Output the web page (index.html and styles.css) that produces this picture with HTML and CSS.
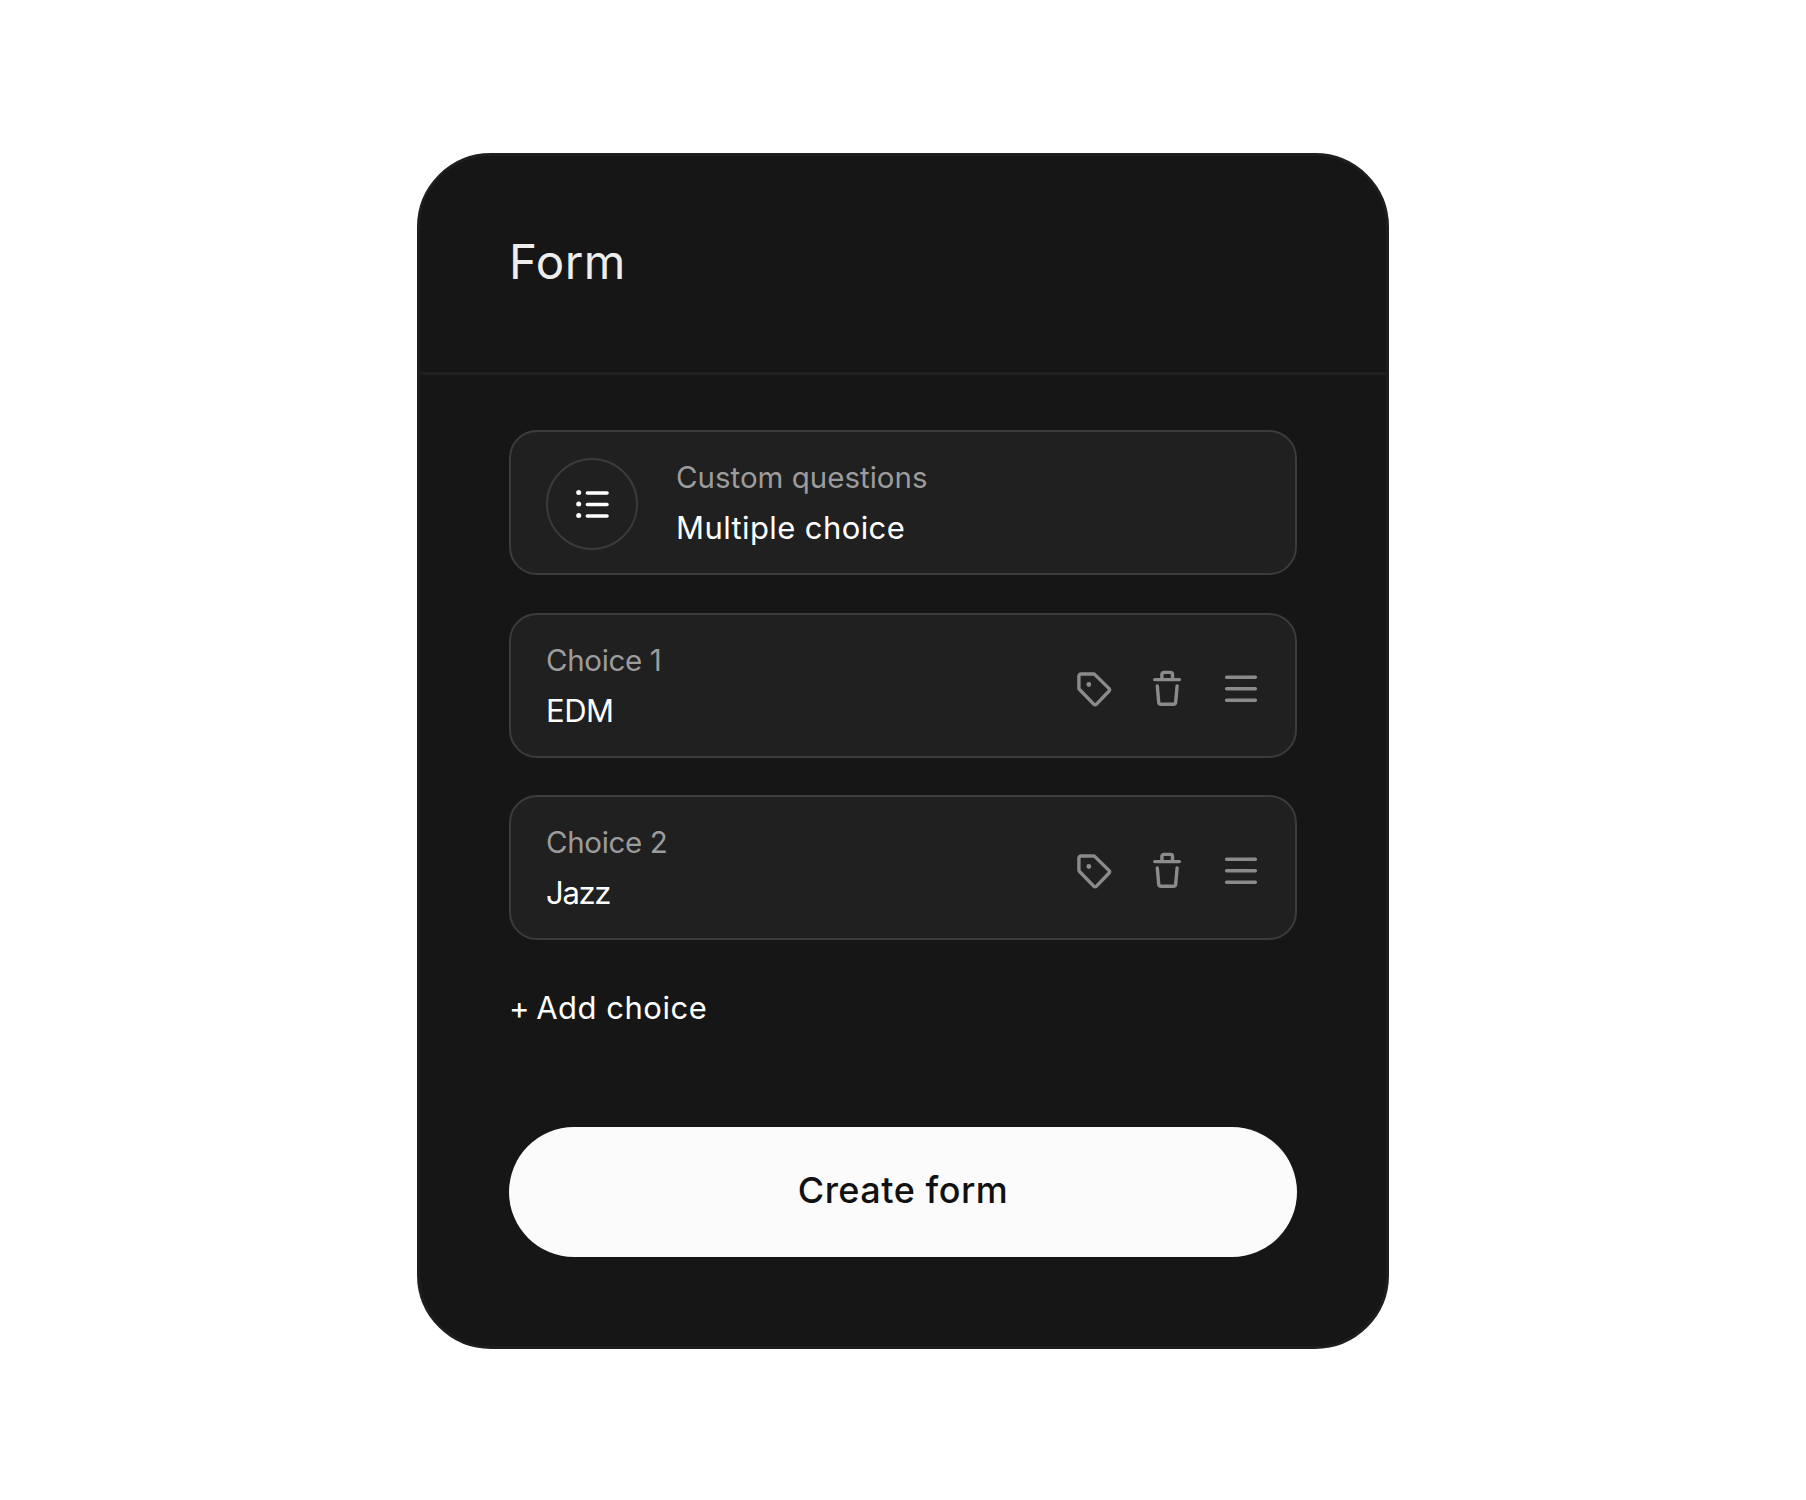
FILE: index.html
```html
<!DOCTYPE html>
<html lang="en">
<head>
    <meta charset="UTF-8">
    <meta name="viewport" content="width=device-width, initial-scale=1.0">
    <title>Form</title>
    <link rel="stylesheet" href="styles.css">
</head>
<body>

    <!-- Shared icons -->
    <svg class="sprite" width="0" height="0">
        <symbol id="icon-tag" viewBox="0 0 37 37">
            <path d="M2.9 6v12.1a2 2 0 0 0 .6 1.4l14.2 14.6a2 2 0 0 0 2.8 0l12.4-12.9a2 2 0 0 0 0-2.8L18.9 4.6a2 2 0 0 0-1.4-.6H4.9a2 2 0 0 0-2 2z"/>
            <circle class="dot" cx="12.8" cy="14.5" r="2.4"/>
        </symbol>
        <symbol id="icon-trash" viewBox="0 0 37 37">
            <path d="M5.7 9.6h24.7M12.9 9.4V4.4a2 2 0 0 1 2-2h6.6a2 2 0 0 1 2 2v5M8.3 15.9l1.4 16.2a2.4 2.4 0 0 0 2.4 2.2h12.2a2.4 2.4 0 0 0 2.4-2.2l1.4-16.2"/>
        </symbol>
        <symbol id="icon-menu" viewBox="0 0 37 37">
            <path d="M3.6 7.3h28.8M3.6 18.8h28.8M3.6 30.3h28.8"/>
        </symbol>
    </svg>

    <!-- Form card -->
    <div class="card">
        <div class="header">
            <h1 class="title">Form</h1>
        </div>

        <div class="content">
            <div class="row">
                <div class="circle">
                    <svg class="icon list-icon" viewBox="0 0 37 37">
                        <path d="M13.4 7H33M13.4 18.5H33M13.4 30H33"/>
                        <circle class="dot" cx="4.7" cy="6.5" r="2.5"/>
                        <circle class="dot" cx="4.7" cy="18" r="2.5"/>
                        <circle class="dot" cx="4.7" cy="29.5" r="2.5"/>
                    </svg>
                </div>
                <div class="text text-wide">
                    <div class="label">Custom questions</div>
                    <div class="value">Multiple choice</div>
                </div>
            </div>

            <div class="row">
                <div class="text">
                    <div class="label">Choice 1</div>
                    <div class="value">EDM</div>
                </div>
                <div class="actions">
                    <svg class="icon"><use href="#icon-tag"/></svg>
                    <svg class="icon"><use href="#icon-trash"/></svg>
                    <svg class="icon"><use href="#icon-menu"/></svg>
                </div>
            </div>

            <div class="row">
                <div class="text">
                    <div class="label">Choice 2</div>
                    <div class="value value-tight">Jazz</div>
                </div>
                <div class="actions">
                    <svg class="icon"><use href="#icon-tag"/></svg>
                    <svg class="icon"><use href="#icon-trash"/></svg>
                    <svg class="icon"><use href="#icon-menu"/></svg>
                </div>
            </div>

            <div class="add"><span class="plus">+</span> Add choice</div>

            <button type="button" class="create">Create form</button>
        </div>
    </div>

</body>
</html>
```
FILE: styles.css
```css
* { box-sizing: border-box; }

body {
    margin: 0;
    min-height: 1500px;
    padding-top: 153px;
    background-color: #fff;
    font-family: Inter, "Liberation Sans", sans-serif;
}

.sprite { display: none; }

.card {
    width: 972px;
    height: 1195.5px;
    margin: 0 auto;
    border: 3px solid #1e1e1e;
    border-radius: 74px;
    background-color: #161616;
}

.header {
    height: 219px;
    padding: 76px 89px 0;
    border-bottom: 3px solid #1f1f1f;
}

.title {
    margin: 0;
    color: #ededed;
    font-size: 47.5px;
    font-weight: 400;
    letter-spacing: 0.5px;
    line-height: 60px;
}

.content {
    display: flex;
    flex-direction: column;
    padding: 55.3px 89px 0;
}

.row {
    display: flex;
    align-items: center;
    height: 145px;
    margin-bottom: 37.4px;
    padding: 1px 35px 0;
    border: 2px solid #3c3c3c;
    border-radius: 28px;
    background-color: #202020;
}

.circle {
    display: flex;
    align-items: center;
    justify-content: center;
    width: 92px;
    height: 92px;
    margin: 2px 38px 0 0;
    border: 2px solid #3a3a3a;
    border-radius: 50%;
}

.label {
    color: #9c9c9c;
    font-size: 29.5px;
    letter-spacing: -0.35px;
    line-height: 50px;
}

.value {
    color: #fff;
    font-size: 31px;
    letter-spacing: -0.5px;
    line-height: 52px;
}

.value-tight { letter-spacing: -1.3px; }

.text-wide .label { letter-spacing: 0; }
.text-wide .value { letter-spacing: 0.4px; }

.actions {
    display: flex;
    gap: 36.7px;
    margin: 5px 0 0 auto;
}

.icon {
    width: 37px;
    height: 37px;
    fill: none;
    stroke: #8b8b8b;
    stroke-width: 3.4;
    stroke-linecap: round;
    stroke-linejoin: round;
    color: #8b8b8b;
}

.list-icon {
    stroke: #fff;
    stroke-width: 3.6;
    color: #fff;
}

.dot {
    fill: currentColor;
    stroke: none;
}

.add {
    margin-top: 11px;
    color: #fff;
    font-size: 31px;
    letter-spacing: 0.5px;
    line-height: 40px;
}

.plus { margin-right: -3px; }

.create {
    height: 129.5px;
    margin-top: 98.8px;
    padding: 0 0 4px;
    border: none;
    border-radius: 65px;
    background-color: #fbfbfb;
    color: #111;
    font-family: inherit;
    font-size: 36px;
    font-weight: 500;
    letter-spacing: 0.5px;
}
```
